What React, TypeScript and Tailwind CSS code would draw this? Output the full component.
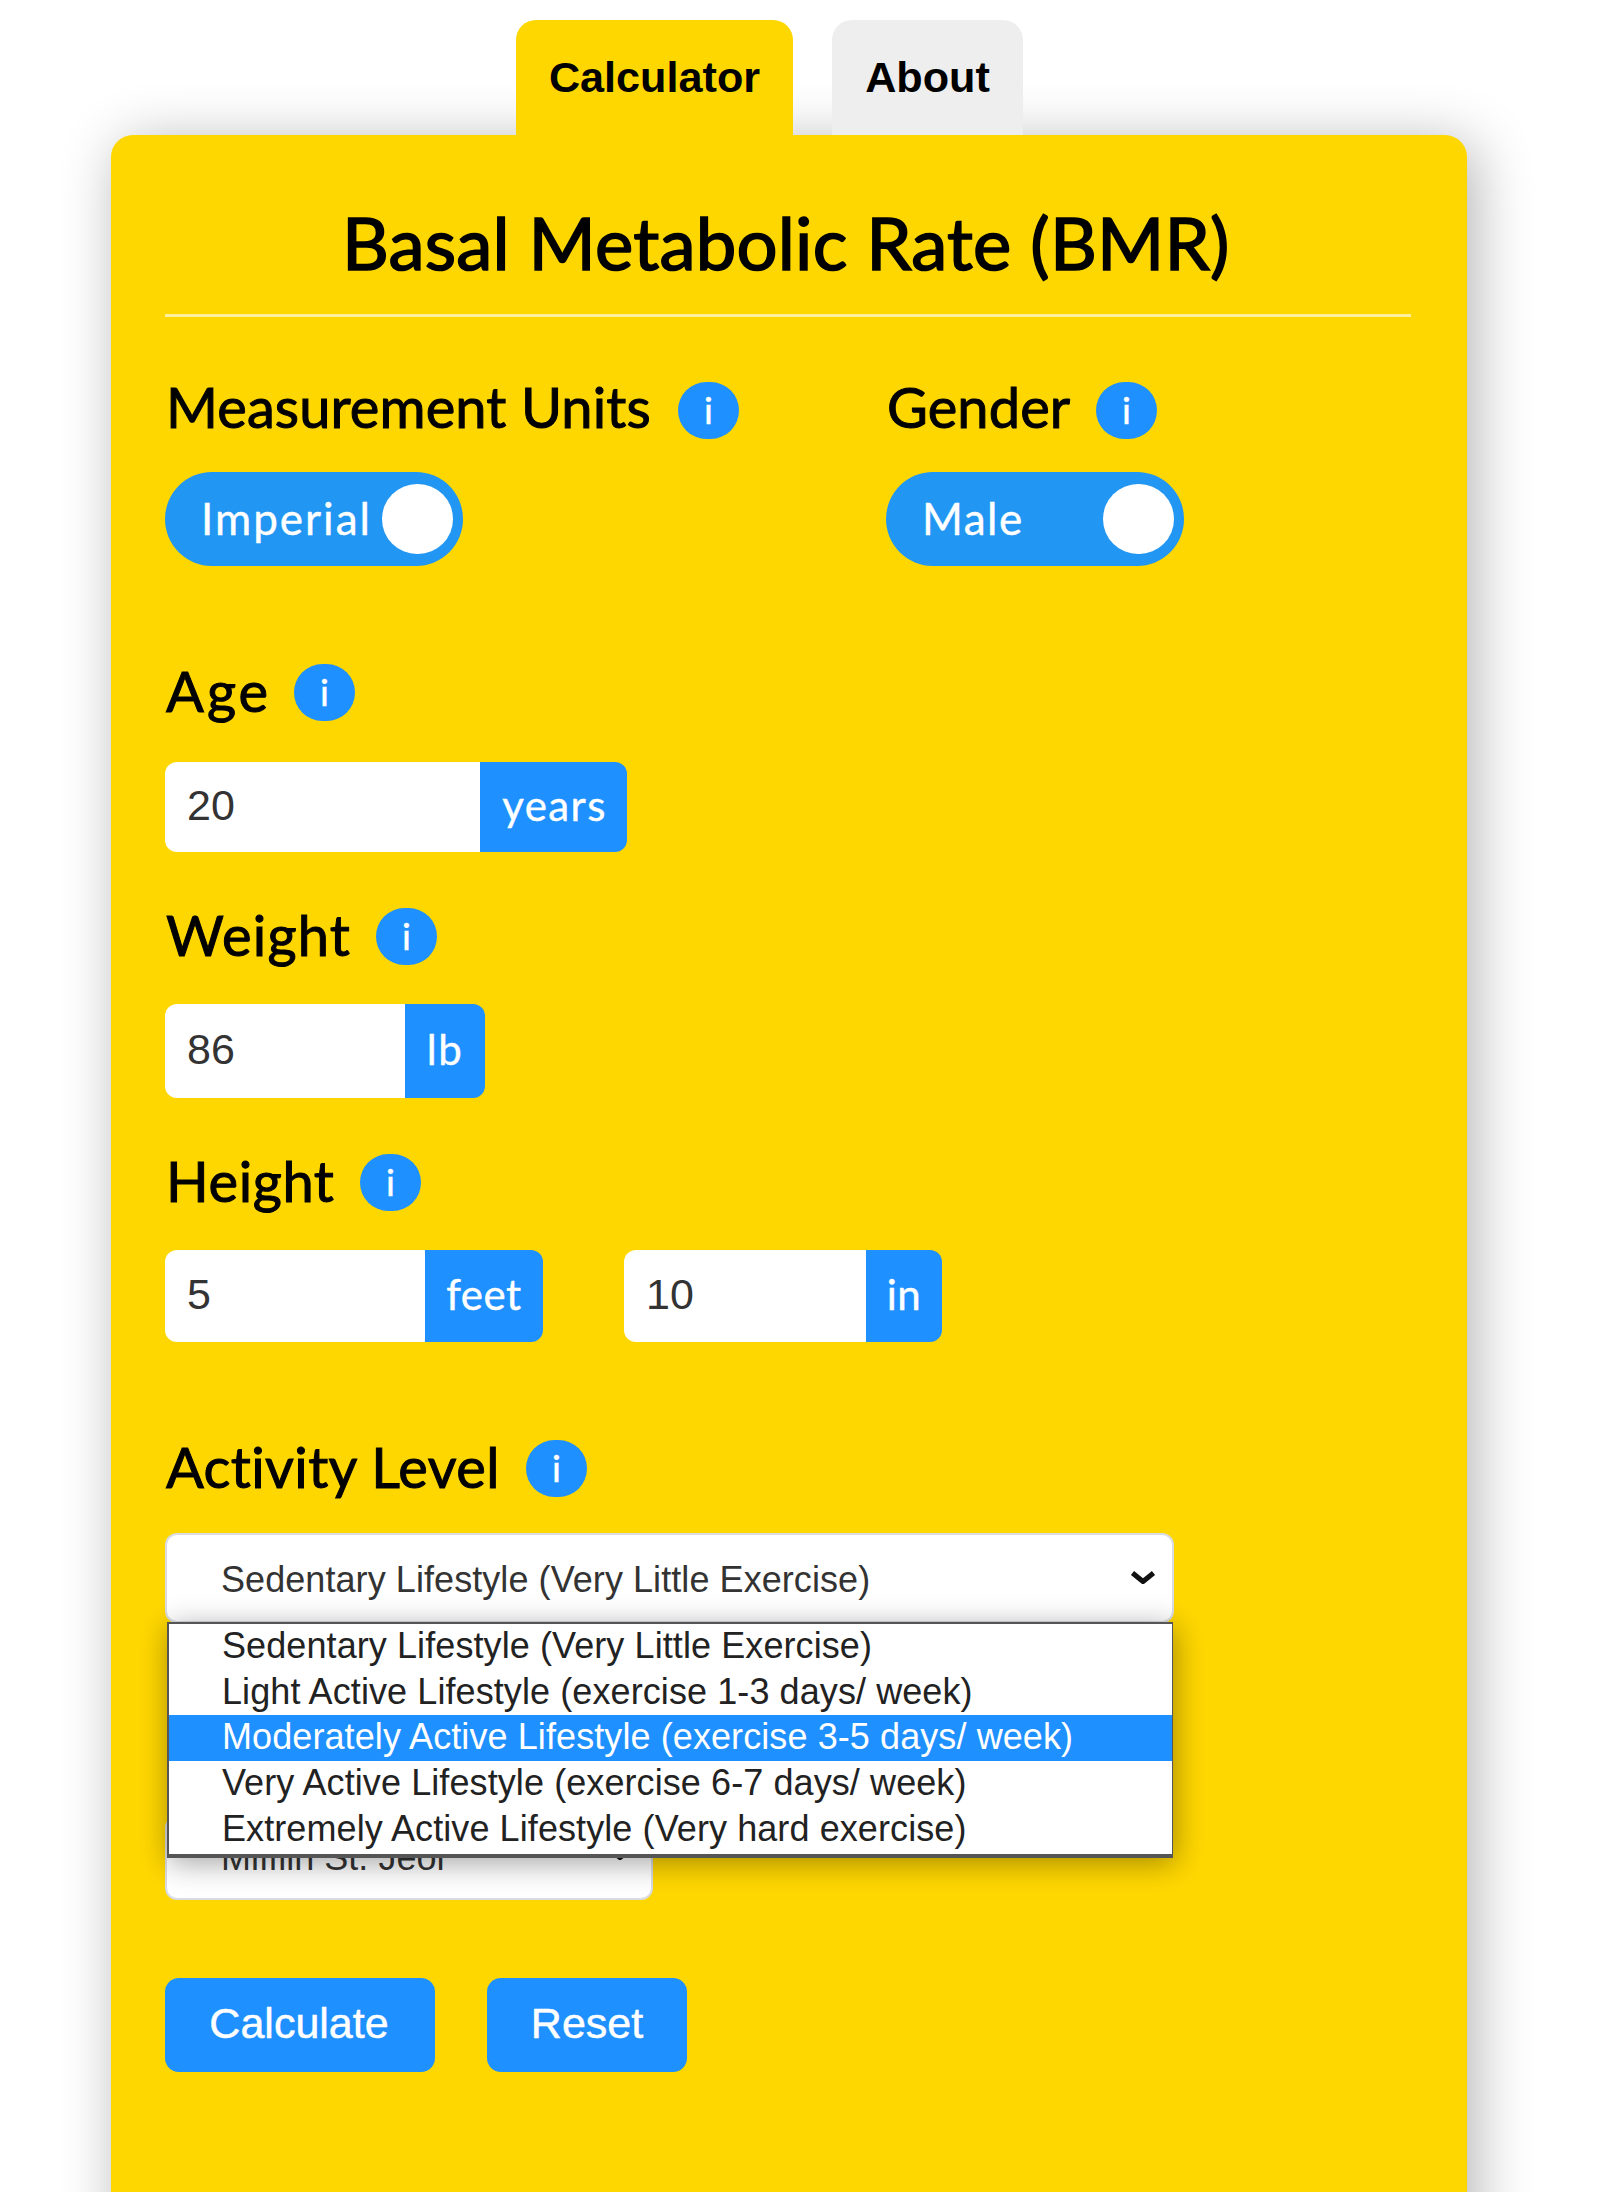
import React from "react";

const label = "font-['Lato'] text-[56px] leading-[56px] whitespace-nowrap text-black [-webkit-text-stroke:1px_black] pl-px";
const value = "font-['Liberation_Sans'] text-[43px] text-[#333] bg-white pl-[22px] pb-[3px] flex items-center rounded-l-xl";
const unit =
  "font-['Lato'] text-[42px] text-white bg-[#1e90ff] flex items-center justify-center rounded-r-xl whitespace-nowrap pb-[3px] [-webkit-text-stroke:0.4px_white]";

function Info() {
  return (
    <span className="flex h-[57px] w-[61px] shrink-0 items-center justify-center rounded-full bg-[#1e90ff] pb-[3px] font-['Lato'] text-[37px] leading-none text-white [-webkit-text-stroke:0.5px_white]">
      i
    </span>
  );
}

function Toggle({ text, spacing }: { text: string; spacing: string }) {
  return (
    <div className="flex h-[94px] w-[298px] items-center justify-between rounded-[47px] bg-[#2196f3] pr-[10px] pl-[36px]">
      <span
        className={`w-[180px] pb-[3px] font-['Lato'] text-[44px] leading-none whitespace-nowrap text-white [-webkit-text-stroke:0.4px_white] ${spacing}`}
      >
        {text}
      </span>
      <span className="h-[70px] w-[71px] shrink-0 rounded-full bg-white" />
    </div>
  );
}

function Chevron() {
  return (
    <svg width="26" height="16" viewBox="0 0 26 16" fill="none">
      <path d="M2.5 3 L13 11.5 L23.5 3" stroke="#111" strokeWidth="5" strokeLinejoin="round" />
    </svg>
  );
}

const options = [
  "Sedentary Lifestyle (Very Little Exercise)",
  "Light Active Lifestyle (exercise 1-3 days/ week)",
  "Moderately Active Lifestyle (exercise 3-5 days/ week)",
  "Very Active Lifestyle (exercise 6-7 days/ week)",
  "Extremely Active Lifestyle (Very hard exercise)",
];

export default function App() {
  return (
    <div className="h-[2192px] w-[1600px] overflow-hidden bg-white pt-5 font-['Liberation_Sans']">
      <div className="relative z-10 ml-[516px] flex h-[115px] gap-[39px] text-[43.2px] leading-none font-bold text-black">
        <div className="flex w-[277px] justify-center rounded-t-[20px] bg-[#ffd700] pt-[36px]">Calculator</div>
        <div className="flex w-[191px] justify-center rounded-t-[20px] bg-[#eee] pt-[36px]">About</div>
      </div>

      <main className="ml-[111px] h-[2200px] w-[1356px] rounded-t-[22px] bg-[#ffd700] px-[54px] pt-[67px] shadow-[8px_8px_57px_rgba(0,0,0,0.3)]">
        <h1 className="h-[112px] pl-[177px] font-['Lato'] text-[72.5px] leading-[80px] tracking-[0.2px] whitespace-nowrap text-black [-webkit-text-stroke:1.6px_black]">
          Basal Metabolic Rate (BMR)
        </h1>
        <div className="h-[3px] w-[1246px] bg-[#fff0a0]" />

        <div className="mt-[65px] flex">
          <section className="w-[721px]">
            <div className="flex h-[57px] items-center">
              <span className={`${label} w-[513px] pb-[7px] tracking-[0.1px]`}>Measurement Units</span>
              <Info />
            </div>
            <div className="mt-[33px]">
              <Toggle text="Imperial" spacing="tracking-[2px]" />
            </div>
          </section>
          <section>
            <div className="flex h-[57px] items-center">
              <span className={`${label} w-[210px] pb-[7px] tracking-[0.1px]`}>Gender</span>
              <Info />
            </div>
            <div className="mt-[33px]">
              <Toggle text="Male" spacing="tracking-[1.5px]" />
            </div>
          </section>
        </div>

        <div className="mt-[98px] flex h-[57px] items-center">
          <span className={`${label} w-[129px] pb-[3px] tracking-[3px]`}>Age</span>
          <Info />
        </div>
        <div className="mt-[41px] flex h-[90px]">
          <div className={`${value} w-[315px]`}>20</div>
          <div className={`${unit} w-[147px] pl-[2px] tracking-[1.4px]`}>years</div>
        </div>

        <div className="mt-[56px] flex h-[57px] items-center">
          <span className={`${label} w-[211px] pb-[3px] tracking-[1.2px]`}>Weight</span>
          <Info />
        </div>
        <div className="mt-[39px] flex h-[94px]">
          <div className={`${value} w-[240px]`}>86</div>
          <div className={`${unit} w-[80px] tracking-[1.5px]`}>lb</div>
        </div>

        <div className="mt-[56px] flex h-[57px] items-center">
          <span className={`${label} w-[195px] pb-[3px] tracking-[0.6px]`}>Height</span>
          <Info />
        </div>
        <div className="mt-[39px] flex h-[92px]">
          <div className={`${value} w-[260px]`}>5</div>
          <div className={`${unit} w-[118px] tracking-[0.5px]`}>feet</div>
          <div className={`${value} ml-[81px] w-[242px]`}>10</div>
          <div className={`${unit} w-[76px] tracking-[0.5px]`}>in</div>
        </div>

        <div className="mt-[98px] flex h-[57px] items-center">
          <span className={`${label} w-[361px] pb-[3px] tracking-[0.4px]`}>Activity Level</span>
          <Info />
        </div>

        <div className="relative mt-[36px] h-[283px]">
          <div className="flex h-[90px] w-[1009px] items-center justify-between rounded-xl border-2 border-[#d9dce2] bg-white pr-[16px] pl-[54px] text-[36px] tracking-[0.07px] text-[#333]">
            <span className="pt-[4px] whitespace-nowrap">{options[0]}</span>
            <Chevron />
          </div>
          <div className="absolute top-[89px] left-[2px] z-10 h-[236px] w-[1006px] border-2 border-r border-b-4 border-[#555] bg-white tracking-[0.09px] shadow-[2px_5px_28px_rgba(0,0,0,0.36)]">
            {options.map((o, i) => (
              <div
                key={o}
                className={`flex h-[45.6px] items-center pb-px pl-[53px] text-[36px] whitespace-nowrap ${i === 2 ? "bg-[#1e90ff] text-white" : "text-[#222]"}`}
              >
                {o}
              </div>
            ))}
          </div>
        </div>

        <div className="flex h-[84px] w-[488px] items-center justify-between rounded-xl border-2 border-[#d9dce2] bg-white pr-[18px] pl-[54px] text-[36px] text-[#333]">
          <span>Mifflin St. Jeor</span>
          <span className="pb-[9px]">
            <Chevron />
          </span>
        </div>

        <div className="mt-[78px] flex h-[94px] gap-[52px] text-[43px] text-white [-webkit-text-stroke:0.5px_white]">
          <button className="w-[270px] rounded-[14px] bg-[#1e90ff] pr-[2px] pb-[4px]">Calculate</button>
          <button className="w-[200px] rounded-[14px] bg-[#1e90ff] pb-[4px]">Reset</button>
        </div>
      </main>
    </div>
  );
}
